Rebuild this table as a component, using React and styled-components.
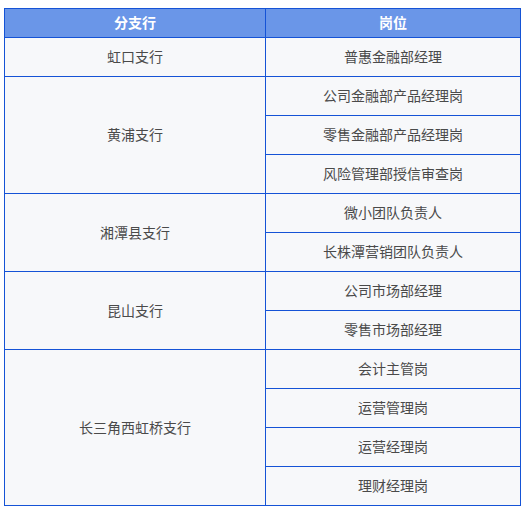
import React from "react";
import styled, { createGlobalStyle } from "styled-components";

const Global = createGlobalStyle`
  html, body { margin: 0; padding: 0; background: #ffffff; }
  body { font-family: "Noto Sans CJK SC", "Noto Sans", sans-serif; }
`;

const Table = styled.div`
  display: grid;
  grid-template-columns: 261px 255px;
  grid-template-rows: 29px repeat(12, 39px);
  margin: 8px 0 0 4px;
  width: 517px;
  box-sizing: border-box;
  border-left: 1px solid #1553d6;
  border-top: 1px solid #1553d6;
`;

const Cell = styled.div`
  box-sizing: border-box;
  border-right: 1px solid #1553d6;
  border-bottom: 1px solid #1553d6;
  display: flex;
  align-items: center;
  justify-content: center;
  padding-bottom: 2px;
  font-size: 14px;
  line-height: 1;
  color: ${(p) => (p.$head ? "#ffffff" : "#4a4a4a")};
  font-weight: ${(p) => (p.$head ? 700 : 400)};
  background: ${(p) => (p.$head ? "#6a96e8" : "#f7f8fa")};
  grid-row: ${(p) => (p.$span ? `span ${p.$span}` : "auto")};
  grid-column: ${(p) => p.$col};
`;

const data = [
  ["虹口支行", ["普惠金融部经理"]],
  ["黄浦支行", ["公司金融部产品经理岗", "零售金融部产品经理岗", "风险管理部授信审查岗"]],
  ["湘潭县支行", ["微小团队负责人", "长株潭营销团队负责人"]],
  ["昆山支行", ["公司市场部经理", "零售市场部经理"]],
  ["长三角西虹桥支行", ["会计主管岗", "运营管理岗", "运营经理岗", "理财经理岗"]],
];

export default function App() {
  return (
    <>
      <Global />
      <Table>
        <Cell $head $col={1}>分支行</Cell>
        <Cell $head $col={2}>岗位</Cell>
        {data.map(([branch, jobs]) => (
          <React.Fragment key={branch}>
            <Cell $col={1} $span={jobs.length}>{branch}</Cell>
            {jobs.map((j) => (
              <Cell key={j} $col={2}>{j}</Cell>
            ))}
          </React.Fragment>
        ))}
      </Table>
    </>
  );
}
